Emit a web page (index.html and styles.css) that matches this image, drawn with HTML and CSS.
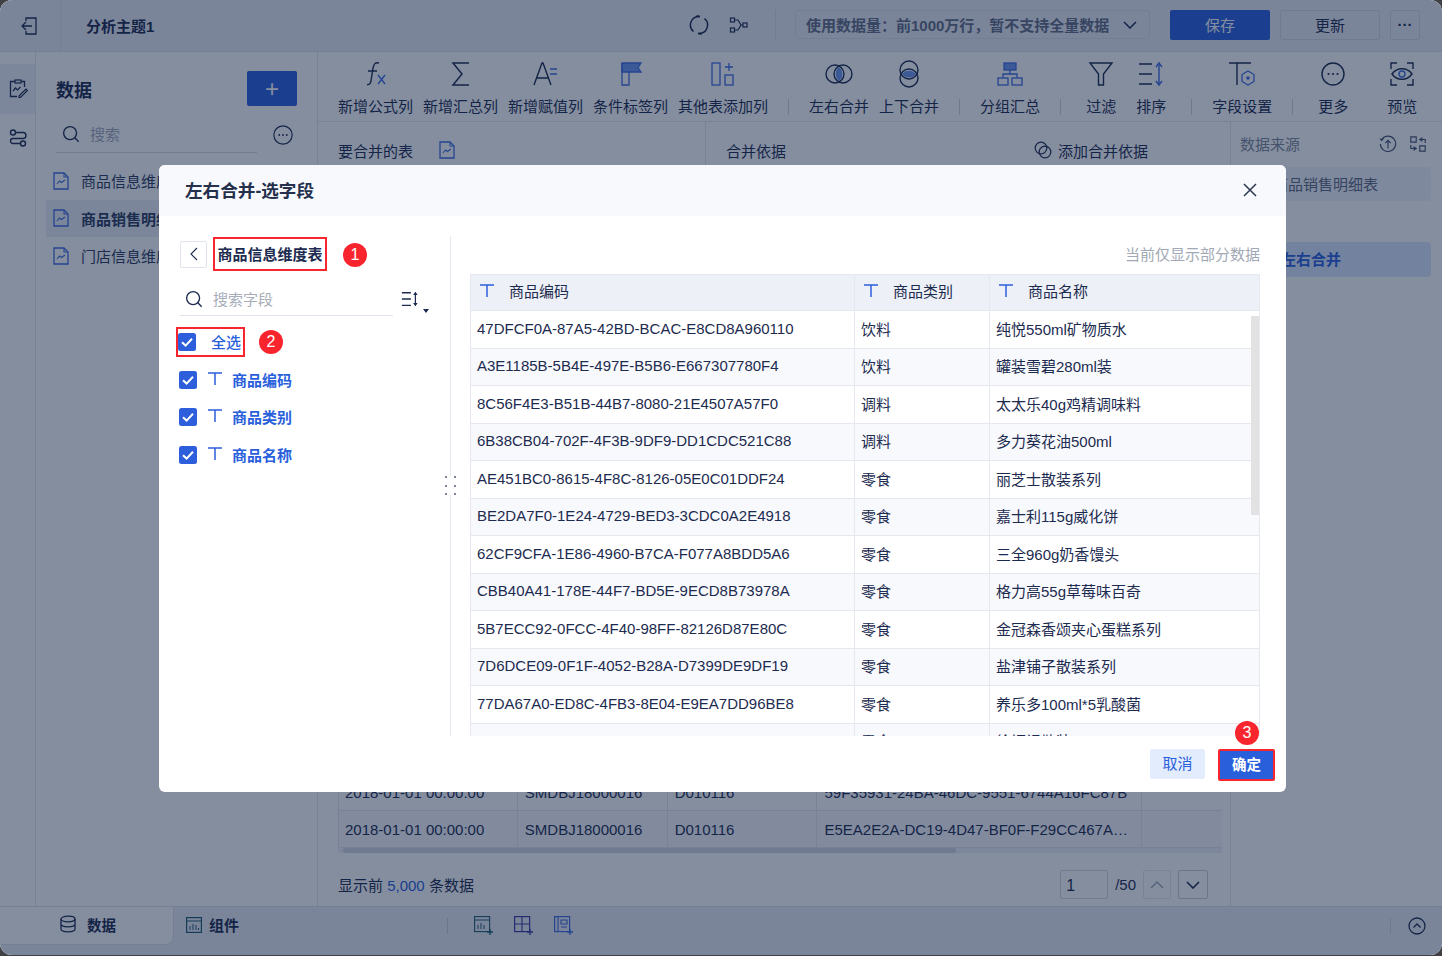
FILE: index.html
```html
<!DOCTYPE html>
<html lang="zh">
<head>
<meta charset="utf-8">
<title>分析主题1</title>
<link rel="stylesheet" href="styles.css">
</head>
<body>
<svg class="defs" width="0" height="0">
  <symbol id="file" viewBox="0 0 16 18"><path d="M1 1h10l4 4v12H1z" fill="none" stroke="#3d6be0" stroke-width="1.3"/><path d="M11 1v4h4" fill="none" stroke="#3d6be0" stroke-width="1.1"/><path d="M4 12l2.5-3 2 1.5L12 8" fill="none" stroke="#3d6be0" stroke-width="1.1"/></symbol>
  <symbol id="check" viewBox="0 0 18 18"><rect width="18" height="18" rx="2.5" fill="#2d5fdc"/><path d="M4 9.2l3.6 3.4L14 5.8" fill="none" stroke="#fff" stroke-width="2"/></symbol>
  <symbol id="tee" viewBox="0 0 14 14"><path d="M0 1h14M7 1v12" fill="none" stroke="#2d5fdc" stroke-width="1.5"/></symbol>
  <symbol id="mag" viewBox="0 0 20 20"><circle cx="9" cy="9" r="7.2" fill="none" stroke="#1c2b4f" stroke-width="1.5"/><path d="M14 14l4.5 4.5" stroke="#1c2b4f" stroke-width="1.5"/></symbol>
  <symbol id="sort" viewBox="0 0 20 20"><path d="M1 3h10M1 10h10M1 17h10" stroke="#1c2b4f" stroke-width="1.5"/><path d="M16 3v14" stroke="#1c2b4f" stroke-width="1.4"/><path d="M13.5 5.5L16 2l2.5 3.5zM13.5 14.5L16 18l2.5-3.5z" fill="#1c2b4f"/></symbol>
  <symbol id="more" viewBox="0 0 24 24"><circle cx="12" cy="12" r="11" fill="none" stroke="#1c2b4f" stroke-width="1.4"/><circle cx="7.5" cy="12" r="1.1" fill="#1c2b4f"/><circle cx="12" cy="12" r="1.1" fill="#1c2b4f"/><circle cx="16.500" cy="12" r="1.1" fill="#1c2b4f"/></symbol>
</svg>

<div class="app">
  <header class="topbar">
    <div class="backcell">
      <svg class="ic20" viewBox="0 0 20 20"><path d="M6 5V2h10v16H6v-3" fill="none" stroke="#1c2b4f" stroke-width="1.3"/><path d="M12 10H2M6 6l-4 4 4 4" fill="none" stroke="#1c2b4f" stroke-width="1.3"/></svg>
    </div>
    <div class="apptitle">分析主题1</div>
    <div class="topright">
      <svg class="ic20" viewBox="0 0 20 20"><path d="M4.500 16.500A8.500 8.500 0 0 1 9.500 1.500M15.500 3.500A8.500 8.500 0 0 1 10.500 18.500" fill="none" stroke="#1c2b4f" stroke-width="1.500"/><path d="M11 1.600L7.500 1M9 18.400l3.500.6" stroke="#1c2b4f" stroke-width="1.800"/></svg>
      <svg class="ic20 gapl" viewBox="0 0 20 20"><rect x="1.500" y="3" width="4" height="4" fill="none" stroke="#1c2b4f" stroke-width="1.200"/><rect x="1.500" y="13" width="4" height="4" fill="none" stroke="#1c2b4f" stroke-width="1.200"/><rect x="14" y="8" width="4" height="4" fill="none" stroke="#1c2b4f" stroke-width="1.200"/><path d="M5.500 5H9l3 5-3 5H5.500M12 10h2" fill="none" stroke="#1c2b4f" stroke-width="1.200"/></svg>
      <span class="vline"></span>
      <div class="selectbox"><span>使用数据量：前1000万行，暂不支持全量数据</span>
        <svg class="chev" viewBox="0 0 14 8"><path d="M1 1l6 6 6-6" fill="none" stroke="#1c2b4f" stroke-width="1.500"/></svg>
      </div>
      <button class="btn primary">保存</button>
      <button class="btn outline">更新</button>
      <button class="btn dots">···</button>
    </div>
  </header>

  <div class="main">
    <nav class="rail">
      <div class="railitem active">
        <svg class="ic20" viewBox="0 0 20 20"><path d="M7 2.500H2.500v15H9M13 2.500h3.500V8" fill="none" stroke="#1c2b4f" stroke-width="1.300"/><rect x="7" y="1" width="6" height="3" fill="none" stroke="#1c2b4f" stroke-width="1.200"/><path d="M5 12l2.500-3 2 2 3-3M11 17l7-7 1.500 1.500-7 7H11z" fill="none" stroke="#1c2b4f" stroke-width="1.200"/></svg>
      </div>
      <div class="railitem">
        <svg class="ic20" viewBox="0 0 20 20"><circle cx="5" cy="4.500" r="2.500" fill="none" stroke="#1c2b4f" stroke-width="1.400"/><circle cx="15" cy="15.500" r="2.500" fill="none" stroke="#1c2b4f" stroke-width="1.400"/><path d="M8 4.500h7a3 3 0 0 1 0 6H5a2.500 2.500 0 0 0 0 5h7" fill="none" stroke="#1c2b4f" stroke-width="1.400"/></svg>
      </div>
    </nav>

    <aside class="datapanel">
      <div class="dp-head"><span class="dp-title">数据</span><button class="plus">+</button></div>
      <div class="dp-search">
        <div class="dp-searchbox"><svg class="ic18" viewBox="0 0 20 20"><use href="#mag"/></svg><span class="ph">搜索</span></div>
        <svg class="ic20 dp-more" viewBox="0 0 24 24"><use href="#more"/></svg>
      </div>
      <div class="dp-item"><svg class="filei"><use href="#file"/></svg><span>商品信息维度表</span></div>
      <div class="dp-item sel"><svg class="filei"><use href="#file"/></svg><span>商品销售明细表</span></div>
      <div class="dp-item"><svg class="filei"><use href="#file"/></svg><span>门店信息维度表</span></div>
    </aside>

    <div class="work">
      <div class="toolbar">
        <div class="tool"><svg class="ticon" viewBox="0 0 28 28"><path d="M17 3c-4-1-5 1-6 5l-2 13c-.6 3-2 4-4 3.500M6 11h9" fill="none" stroke="#1c2b4f" stroke-width="1.400"/><path d="M16 15l7 9M23 15l-7 9" stroke="#3d6be0" stroke-width="1.400"/></svg><span>新增公式列</span></div>
        <div class="tool"><svg class="ticon" viewBox="0 0 28 28"><path d="M22 3H6l9 11-9 11h16" fill="none" stroke="#1c2b4f" stroke-width="1.500"/></svg><span>新增汇总列</span></div>
        <div class="tool"><svg class="ticon" viewBox="0 0 28 28"><path d="M2 25L10 3h1l8 22M5 18h11" fill="none" stroke="#1c2b4f" stroke-width="1.400"/><path d="M18 9h7M18 14h7" stroke="#3d6be0" stroke-width="1.400"/></svg><span>新增赋值列</span></div>
        <div class="tool"><svg class="ticon" viewBox="0 0 28 28"><path d="M5 3h19l-3 4.500 3 4.500H5z" fill="#6d94ee" stroke="#3d6be0" stroke-width="1.300"/><path d="M5 3v22h7V12" fill="none" stroke="#3d6be0" stroke-width="1.300"/></svg><span>条件标签列</span></div>
        <div class="tool"><svg class="ticon" viewBox="0 0 28 28"><rect x="3" y="3" width="8" height="22" fill="none" stroke="#3d6be0" stroke-width="1.300"/><rect x="16" y="15" width="8" height="10" fill="none" stroke="#3d6be0" stroke-width="1.300"/><path d="M20 3v8M16 7h8" stroke="#3d6be0" stroke-width="1.300"/></svg><span>其他表添加列</span></div>
        <span class="tsep"></span>
        <div class="tool"><svg class="ticon" viewBox="0 0 28 28"><circle cx="10" cy="14" r="9" fill="none" stroke="#1c2b4f" stroke-width="1.400"/><circle cx="18" cy="14" r="9" fill="none" stroke="#1c2b4f" stroke-width="1.400"/><path d="M14 7a9 9 0 0 1 0 14 9 9 0 0 1 0-14z" fill="#6d94ee"/></svg><span>左右合并</span></div>
        <div class="tool"><svg class="ticon" viewBox="0 0 28 28"><circle cx="14" cy="10" r="9" fill="none" stroke="#1c2b4f" stroke-width="1.400"/><circle cx="14" cy="18" r="9" fill="none" stroke="#1c2b4f" stroke-width="1.400"/><path d="M7 14a9 9 0 0 1 14 0 9 9 0 0 1-14 0z" fill="#6d94ee"/></svg><span>上下合并</span></div>
        <span class="tsep"></span>
        <div class="tool"><svg class="ticon" viewBox="0 0 28 28"><rect x="8" y="3" width="12" height="7" fill="#6d94ee" stroke="#3d6be0" stroke-width="1.300"/><rect x="2" y="18" width="10" height="7" fill="none" stroke="#3d6be0" stroke-width="1.300"/><rect x="16" y="18" width="10" height="7" fill="none" stroke="#3d6be0" stroke-width="1.300"/><path d="M14 10v4M7 18v-4h14v4" fill="none" stroke="#3d6be0" stroke-width="1.300"/></svg><span>分组汇总</span></div>
        <span class="tsep"></span>
        <div class="tgroup filtergroup">
          <div class="tool"><svg class="ticon" viewBox="0 0 28 28"><path d="M3 3h22l-8.500 11v11h-5V14z" fill="none" stroke="#1c2b4f" stroke-width="1.400"/></svg><span>过滤</span></div>
          <div class="tool"><svg class="ticon" viewBox="0 0 28 28"><path d="M2 4h13M2 14h13M2 24h13" stroke="#1c2b4f" stroke-width="1.400"/><path d="M22 4v20" stroke="#3d6be0" stroke-width="1.400"/><path d="M19 7l3-4 3 4M19 21l3 4 3-4" fill="none" stroke="#3d6be0" stroke-width="1.400"/></svg><span>排序</span></div>
        </div>
        <span class="tsep"></span>
        <div class="tgroup">
          <div class="tool"><svg class="ticon" viewBox="0 0 28 28"><path d="M1 3h22M9 3v22" fill="none" stroke="#1c2b4f" stroke-width="1.400"/><path d="M20 11l6 3.500v7L20 25l-6-3.500v-7z" fill="none" stroke="#3d6be0" stroke-width="1.300"/><circle cx="20" cy="18" r="1.800" fill="#3d6be0"/></svg><span>字段设置</span></div>
        </div>
        <span class="tsep"></span>
        <div class="tgroup moregroup">
          <div class="tool"><svg class="ticon" viewBox="-2 -2 28 28"><use href="#more" width="24" height="24"/></svg><span>更多</span></div>
          <div class="tool"><svg class="ticon" viewBox="0 0 28 28"><path d="M3 9V3h6M19 3h6v6M25 19v6h-6M9 25H3v-6" fill="none" stroke="#1c2b4f" stroke-width="1.400"/><path d="M4 14c5-7 15-7 20 0-5 7-15 7-20 0z" fill="none" stroke="#1c2b4f" stroke-width="1.400"/><circle cx="14" cy="14" r="3" fill="none" stroke="#3d6be0" stroke-width="1.400"/></svg><span>预览</span></div>
        </div>
      </div>

      <div class="workbody">
        <section class="center">
          <div class="mergehead">
            <div class="mh-left">要合并的表<svg class="filei"><use href="#file"/></svg></div>
            <div class="mh-right"><span>合并依据</span><span class="addkey"><svg class="ic18" viewBox="0 0 18 18"><circle cx="7" cy="7" r="5.800" fill="none" stroke="#1c2b4f" stroke-width="1.200"/><circle cx="11" cy="11" r="5.800" fill="none" stroke="#1c2b4f" stroke-width="1.200"/></svg>添加合并依据</span></div>
          </div>
          <div class="bgspace"></div>
          <div class="bgtable">
            <div class="bgrow"><span class="c1">2018-01-01 00:00:00</span><span class="c2">SMDBJ18000016</span><span class="c3">D010116</span><span class="c4">59F35931-24BA-46DC-9551-6744A16FC87B</span><span class="c5"></span></div>
            <div class="bgrow alt"><span class="c1">2018-01-01 00:00:00</span><span class="c2">SMDBJ18000016</span><span class="c3">D010116</span><span class="c4">E5EA2E2A-DC19-4D47-BF0F-F29CC467A…</span><span class="c5"></span></div>
          </div>
          <div class="hscroll"><div class="hthumb"></div></div>
          <div class="pager">
            <div>显示前 <span class="link">5,000</span> 条数据</div>
            <div class="pagerright">
              <span class="pageinput">1</span><span class="pagecount">/50</span>
              <span class="pagebtn off"><svg viewBox="0 0 14 8"><path d="M1 7l6-6 6 6" fill="none" stroke="#9aa3b5" stroke-width="1.400"/></svg></span>
              <span class="pagebtn"><svg viewBox="0 0 14 8"><path d="M1 1l6 6 6-6" fill="none" stroke="#1c2b4f" stroke-width="1.600"/></svg></span>
            </div>
          </div>
        </section>
        <aside class="source">
          <div class="src-head"><span>数据来源</span>
            <svg class="ic18" viewBox="0 0 20 20"><path d="M3 5a8.500 8.500 0 1 1-1.500 5" fill="none" stroke="#44526e" stroke-width="1.300"/><path d="M1 4l2 2 2-2M10 15V6M7 9l3-3 3 3" fill="none" stroke="#44526e" stroke-width="1.300"/></svg>
            <svg class="ic18" viewBox="0 0 20 20"><path d="M2 2h6v6H2zM12 12h6v6h-6z" fill="none" stroke="#44526e" stroke-width="1.300"/><path d="M12 5h6V9M15 3l-3 2 3 2M8 15H2v-4M5 13l3 2-3 2" fill="none" stroke="#44526e" stroke-width="1.300"/></svg>
          </div>
          <div class="src-card">商品销售明细表</div>
          <div class="src-step">左右合并</div>
        </aside>
      </div>
    </div>
  </div>

  <footer class="bottombar">
    <div class="tab-data">
      <svg class="ic18" viewBox="0 0 18 18"><ellipse cx="9" cy="4" rx="7" ry="2.800" fill="none" stroke="#1c2b4f" stroke-width="1.300"/><path d="M2 4v10c0 1.500 3 2.800 7 2.800s7-1.300 7-2.800V4M2 9c0 1.500 3 2.800 7 2.800s7-1.300 7-2.800" fill="none" stroke="#1c2b4f" stroke-width="1.300"/></svg>
      数据
    </div>
    <div class="tab-comp">
      <svg class="ic16" viewBox="0 0 16 16"><rect x=".6" y=".6" width="14.800" height="14.800" fill="none" stroke="#1e5a6e" stroke-width="1.200"/><path d="M1 4h14M4 13V9M7 13V7M10 13V8M12.500 13v-2" stroke="#1e5a6e" stroke-width="1"/></svg>
      组件
    </div>
    <span class="bsep"></span>
    <svg class="bicon" viewBox="0 0 20 20"><rect x=".6" y=".6" width="15" height="15" fill="none" stroke="#1e5a6e" stroke-width="1.100"/><path d="M1 4h15M4 13V9M7 13V7M10 13V9" stroke="#1e5a6e"/><path d="M16 13v6M13 16h6" stroke="#1e5a6e" stroke-width="1.300"/></svg>
    <svg class="bicon" viewBox="0 0 20 20"><rect x=".6" y=".6" width="15" height="15" fill="none" stroke="#3a3aa0" stroke-width="1.200"/><path d="M1 8h15M8 1v15" stroke="#3a3aa0" stroke-width="1.100"/><path d="M16 13v6M13 16h6" stroke="#3a3aa0" stroke-width="1.300"/></svg>
    <svg class="bicon" viewBox="0 0 20 20"><rect x=".6" y=".6" width="15" height="15" fill="none" stroke="#3d6be0" stroke-width="1.200"/><path d="M4 1v15M7 4h6v4H7zM7 11h6" fill="none" stroke="#3d6be0" stroke-width="1.100"/><path d="M16 13v6M13 16h6" stroke="#3d6be0" stroke-width="1.300"/></svg>
    <div class="bright">
      <span class="bsep2"></span>
      <svg class="ic18" viewBox="0 0 18 18"><circle cx="9" cy="9" r="8" fill="none" stroke="#1c2b4f" stroke-width="1.300"/><path d="M5.500 10.500L9 7l3.500 3.500" fill="none" stroke="#1c2b4f" stroke-width="1.300"/></svg>
    </div>
  </footer>
</div>

<div class="overlay"></div>

<div class="modal">
  <div class="modal-head">
    <span>左右合并-选字段</span>
    <svg class="closex" viewBox="0 0 14 14"><path d="M1 1l12 12M13 1L1 13" stroke="#2b3750" stroke-width="1.500"/></svg>
  </div>
  <div class="modal-body">
    <div class="fieldpane">
      <div class="fp-top">
        <span class="backbtn"><svg viewBox="0 0 8 14"><path d="M7 1L1 7l6 6" fill="none" stroke="#1c2b4f" stroke-width="1.100"/></svg></span>
        <span class="tablename">商品信息维度表</span>
        <span class="badge">1</span>
      </div>
      <div class="fp-search">
        <div class="fp-searchbox"><svg class="ic18" viewBox="0 0 20 20"><use href="#mag"/></svg><span class="ph2">搜索字段</span></div>
        <svg class="ic18 sorti" viewBox="0 0 20 20"><use href="#sort"/></svg>
        <span class="caret"></span>
      </div>
      <div class="fp-all">
        <label class="allbox"><svg class="cb"><use href="#check"/></svg><span>全选</span></label>
        <span class="badge">2</span>
      </div>
      <div class="fp-field"><svg class="cb"><use href="#check"/></svg><svg class="teei"><use href="#tee"/></svg><span>商品编码</span></div>
      <div class="fp-field"><svg class="cb"><use href="#check"/></svg><svg class="teei"><use href="#tee"/></svg><span>商品类别</span></div>
      <div class="fp-field"><svg class="cb"><use href="#check"/></svg><svg class="teei"><use href="#tee"/></svg><span>商品名称</span></div>
      <div class="grip"><i></i><i></i><i></i><i></i><i></i><i></i></div>
    </div>
    <div class="previewpane">
      <div class="hint">当前仅显示部分数据</div>
      <div class="grid">
        <div class="gr gh"><div class="g1"><svg class="teei"><use href="#tee"/></svg>商品编码</div><div class="g2"><svg class="teei"><use href="#tee"/></svg>商品类别</div><div class="g3"><svg class="teei"><use href="#tee"/></svg>商品名称</div></div>
        <div class="gr"><div class="g1">47DFCF0A-87A5-42BD-BCAC-E8CD8A960110</div><div class="g2">饮料</div><div class="g3">纯悦550ml矿物质水</div></div>
        <div class="gr alt"><div class="g1">A3E1185B-5B4E-497E-B5B6-E667307780F4</div><div class="g2">饮料</div><div class="g3">罐装雪碧280ml装</div></div>
        <div class="gr"><div class="g1">8C56F4E3-B51B-44B7-8080-21E4507A57F0</div><div class="g2">调料</div><div class="g3">太太乐40g鸡精调味料</div></div>
        <div class="gr alt"><div class="g1">6B38CB04-702F-4F3B-9DF9-DD1CDC521C88</div><div class="g2">调料</div><div class="g3">多力葵花油500ml</div></div>
        <div class="gr"><div class="g1">AE451BC0-8615-4F8C-8126-05E0C01DDF24</div><div class="g2">零食</div><div class="g3">丽芝士散装系列</div></div>
        <div class="gr alt"><div class="g1">BE2DA7F0-1E24-4729-BED3-3CDC0A2E4918</div><div class="g2">零食</div><div class="g3">嘉士利115g威化饼</div></div>
        <div class="gr"><div class="g1">62CF9CFA-1E86-4960-B7CA-F077A8BDD5A6</div><div class="g2">零食</div><div class="g3">三全960g奶香馒头</div></div>
        <div class="gr alt"><div class="g1">CBB40A41-178E-44F7-BD5E-9ECD8B73978A</div><div class="g2">零食</div><div class="g3">格力高55g草莓味百奇</div></div>
        <div class="gr"><div class="g1">5B7ECC92-0FCC-4F40-98FF-82126D87E80C</div><div class="g2">零食</div><div class="g3">金冠森香颂夹心蛋糕系列</div></div>
        <div class="gr alt"><div class="g1">7D6DCE09-0F1F-4052-B28A-D7399DE9DF19</div><div class="g2">零食</div><div class="g3">盐津铺子散装系列</div></div>
        <div class="gr"><div class="g1">77DA67A0-ED8C-4FB3-8E04-E9EA7DD96BE8</div><div class="g2">零食</div><div class="g3">养乐多100ml*5乳酸菌</div></div>
        <div class="gr alt"><div class="g1"></div><div class="g2">零食</div><div class="g3">徐福记散装</div></div>
        <div class="vscroll"></div>
      </div>
    </div>
  </div>
  <div class="modal-foot">
    <button class="mbtn cancel">取消</button>
    <button class="mbtn ok">确定<span class="badge badge3">3</span></button>
  </div>
</div>
</body>
</html>
```

FILE: styles.css
```css
* { box-sizing: border-box; }
html, body { margin: 0; padding: 0; }
body {
  width: 1442px;
  height: 956px;
  overflow: hidden;
  background: #3f4145;
  font-family: "Liberation Sans", "Noto Sans CJK SC", sans-serif;
  font-size: 15px;
  color: #1c2b4f;
  position: relative;
}
button { font: inherit; border: 0; padding: 0; }
.defs { position: absolute; }
.ic20 { width: 20px; height: 20px; flex: none; }
.ic18 { width: 18px; height: 18px; flex: none; }
.ic16 { width: 16px; height: 16px; flex: none; }

.app {
  width: 1442px;
  height: 955px;
  border-radius: 12px;
  overflow: hidden;
  background: #fff;
  display: flex;
  flex-direction: column;
}

/* top bar */
.topbar {
  height: 52px;
  flex: none;
  display: flex;
  align-items: center;
  background: #ebedf3;
  border-bottom: 1px solid #dfe2ea;
}
.backcell {
  width: 61px;
  height: 51px;
  display: flex;
  align-items: center;
  padding-left: 20px;
  border-right: 1px solid #dfe2ea;
}
.apptitle { margin-left: 25px; font-weight: 700; font-size: 15px; }
.topright { margin-left: auto; display: flex; align-items: center; padding: 0 22px 2px 0; }
.gapl { margin-left: 20px; }
.vline { width: 1px; height: 30px; background: #d8dce5; margin: 0 19px 0 26px; }
.selectbox {
  width: 355px;
  height: 29px;
  border: 1px solid #dbdfe8;
  border-radius: 3px;
  padding: 0 10px;
  display: flex;
  align-items: center;
  justify-content: space-between;
  font-weight: 700;
  color: #626d85;
  font-size: 15px;
  white-space: nowrap;
}
.chev { width: 14px; height: 8px; margin-right: 2px; flex: none; }
.btn { height: 30px; border-radius: 2px; background: transparent; color: #1c2b4f; }
.primary { width: 100px; margin-left: 20px; background: #2a5fdc; color: #fff; }
.outline { width: 100px; margin-left: 10px; border: 1px solid #d5d9e3; }
.dots { width: 30px; margin-left: 10px; border: 1px solid #d5d9e3; font-weight: 700; }

/* main */
.main { flex: 1; display: flex; min-height: 0; }
.rail { width: 36px; flex: none; border-right: 1px solid #e4e7ee; padding-top: 12px; }
.railitem { height: 50px; display: flex; align-items: center; justify-content: center; }
.railitem.active { background: #eef0f6; }
.railitem + .railitem { height: 48px; }

.datapanel { width: 282px; flex: none; border-right: 1px solid #e4e7ee; padding-left: 10px; }
.dp-head { display: flex; align-items: center; justify-content: space-between; padding: 19px 20px 0 10px; height: 54px; }
.dp-title { font-size: 18px; font-weight: 700; }
.plus { width: 50px; height: 35px; border-radius: 2px; background: #2a5fdc; color: #fff; font-size: 24px; line-height: 30px; font-weight: 300; }
.dp-search { display: flex; align-items: center; margin: 11px 0 9px 10px; }
.dp-searchbox { width: 201px; height: 36px; border-bottom: 1px solid #d5d9e3; display: flex; align-items: center; padding: 0 0 2px 6px; }
.ph { margin-left: 10px; color: #a4abb9; font-size: 15px; }
.dp-more { margin-left: 16px; }
.dp-item { height: 37.500px; display: flex; align-items: center; padding-left: 7px; white-space: nowrap; color: #2b3a5c; font-size: 15px; overflow: hidden; }
.dp-item.sel { background: #eceff5; font-weight: 700; }
.filei { width: 16px; height: 18px; flex: none; margin-right: 12px; }

.work { flex: 1; display: flex; flex-direction: column; min-width: 0; }
.toolbar {
  height: 70px;
  flex: none;
  border-bottom: 1px solid #e4e7ee;
  display: flex;
  align-items: flex-start;
  padding: 8px 0 0 20px;
  gap: 10px;
}
.tool { display: flex; flex-direction: column; align-items: center; white-space: nowrap; }
.tool span { line-height: 22px; margin-top: 8px; }
.ticon { width: 28px; height: 28px; display: block; margin-top: 0; }
.tsep { width: 1px; height: 16px; margin: 39px 10px 0 10px; background: #cfd4df; flex: none; }
.tgroup { display: flex; gap: 20px; }
.filtergroup { padding: 0 5px; }
.moregroup { padding-left: 5px; gap: 39px; }

.workbody { flex: 1; display: flex; min-height: 0; }
.center { flex: 1; display: flex; flex-direction: column; padding: 0 8px 0 20px; border-right: 1px solid #e4e7ee; min-width: 0; }
.mergehead { display: flex; height: 58px; }
.mh-left { width: 368px; height: 58px; display: flex; align-items: center; gap: 26px; padding-bottom: 2px; border-right: 1px solid #e4e7ee; }
.mh-left .filei { margin: 0; }
.mh-right { flex: 1; display: flex; align-items: center; justify-content: space-between; padding: 0 74px 2px 20px; }
.addkey { display: flex; align-items: center; gap: 6px; }
.bgspace { flex: 1; }
.bgtable { border-left: 1px solid #e4e7ee; font-size: 15px; }
.bgrow { height: 37px; display: flex; align-items: center; border-bottom: 1px solid #e4e7ee; white-space: nowrap; }
.bgrow.alt { background: #f8f9fd; }
.bgrow span { height: 100%; padding-left: 7px; display: flex; align-items: center; border-right: 1px solid #e4e7ee; }
.bgrow .c1 { width: 179px; padding-left: 6px; }
.c2 { width: 150px; }
.c3 { width: 150px; }
.c4 { width: 325px; }
.c5 { width: 80px; border-right: 0 !important; }
.hscroll { height: 5px; background: #eef0f6; }
.hthumb { width: 613px; height: 5px; margin-left: 5px; border-radius: 3px; background: #d3d7e0; }
.pager { height: 53px; display: flex; align-items: center; justify-content: space-between; padding: 10px 14px 0 0; }
.link { color: #2a5fdc; }
.pagerright { display: flex; align-items: center; }
.pageinput { width: 48px; height: 29px; border: 1px solid #d5d9e3; border-radius: 2px; padding-left: 5px; line-height: 30px; font-size: 16px; }
.pagecount { margin: 0 7px; }
.pagebtn { width: 30px; height: 29px; border: 1px solid #c9ced9; border-radius: 2px; display: flex; align-items: center; justify-content: center; margin-left: 7px; }
.pagebtn svg { width: 14px; height: 8px; }
.pagebtn.off { width: 28px; border-color: #e4e7ee; margin-left: 0; }

.source { width: 211px; flex: none; padding: 0 11px 0 9px; }
.src-head { height: 45px; display: flex; align-items: center; color: #7f8899; gap: 12px; padding: 0 4px 2px 0; }
.src-head span { margin-right: auto; }
.src-card { height: 34px; margin-left: 1px; background: #f3f5fa; border-radius: 4px; line-height: 36px; padding-left: 32px; color: #5d6880; }
.src-step { height: 35px; margin: 41px 0 0 1px; background: #dbe6fd; border-radius: 4px; line-height: 35px; padding-left: 40px; color: #2a5fdc; font-weight: 700; }

/* bottom */
.bottombar { height: 49px; flex: none; background: #ebedf3; border-top: 1px solid #dfe2ea; display: flex; align-items: center; padding-bottom: 10px; position: relative; }
.tab-data { width: 174px; height: 38px; margin-top: 0; align-self: flex-start; background: #fff; border-right: 1px solid #dde0e8; border-bottom: 1px solid #dde0e8; border-radius: 0 0 8px 0; display: flex; align-items: center; padding: 0 0 3px 59px; gap: 10px; font-weight: 700; font-size: 14.500px; }
.tab-comp { display: flex; align-items: center; gap: 7px; margin: 0 0 3px 12px; font-weight: 700; }
.bsep { width: 1px; height: 16px; background: #c9ced9; margin: 0 26px 0 208px; }
.bicon { width: 20px; height: 20px; margin-right: 20px; }
.bright { margin-left: auto; display: flex; align-items: center; gap: 17px; padding-right: 16px; }
.bsep2 { width: 1px; height: 16px; background: #d3d7e0; }

/* overlay */
.overlay { position: absolute; inset: 0 0 1px 0; border-radius: 12px; background: rgba(11, 29, 63, .5); }

/* modal */
.modal {
  position: absolute;
  left: 159px;
  top: 165px;
  width: 1127px;
  height: 627px;
  background: #fff;
  border-radius: 6px;
  overflow: visible;
  display: flex;
  flex-direction: column;
}
.modal-head {
  height: 51px;
  flex: none;
  background: #f8f9fd;
  border-radius: 6px 6px 0 0;
  display: flex;
  align-items: center;
  justify-content: space-between;
  padding: 0 29px 2px 26px;
  font-size: 17.600px;
  font-weight: 700;
  color: #24304c;
}
.closex { width: 14px; height: 14px; }
.modal-body { height: 520px; flex: none; display: flex; padding-top: 20px; }
.fieldpane { width: 292px; height: 500px; flex: none; border-right: 1px solid #e6e8f0; padding: 1px 0 0 21px; position: relative; }
.fp-top { display: flex; align-items: center; height: 34px; }
.backbtn { width: 27px; height: 27px; border: 1px solid #dfe3ec; border-radius: 2px; display: flex; align-items: center; justify-content: center; }
.backbtn svg { width: 8px; height: 14px; }
.tablename { margin-left: 6px; width: 114px; height: 34px; border: 2px solid #f9252e; display: flex; align-items: center; justify-content: center; padding-bottom: 2px; font-size: 15px; font-weight: 700; white-space: nowrap; }
.badge { width: 24px; height: 24px; border-radius: 50%; background: #f9252e; color: #fff; font-size: 16px; display: flex; align-items: center; justify-content: center; flex: none; }
.fp-top .badge { margin: 2px 0 0 16px; }
.fp-search { display: flex; align-items: center; margin-top: 11px; position: relative; height: 34px; }
.fp-searchbox { width: 213px; height: 34px; border-bottom: 1px solid #e0e3ec; display: flex; align-items: center; padding-left: 5px; }
.ph2 { margin-left: 10px; color: #a7adba; font-size: 15px; }
.sorti { margin-left: 8px; }
.caret { position: absolute; left: 243px; top: 27px; border: 3.500px solid transparent; border-top: 4px solid #1c2b4f; }
.fp-all { display: flex; align-items: center; margin: 11px 0 0 -4px; height: 30px; }
.allbox { width: 69px; height: 30px; border: 2px solid #f9252e; display: flex; align-items: center; padding: 0 0 1px 0; color: #2a5fdc; font-weight: 500; }
.allbox span { margin-left: 15px; }
.fp-all .badge { margin-left: 14px; }
.cb { width: 18px; height: 18px; flex: none; }
.fp-field { display: flex; align-items: center; height: 37.500px; margin-left: -1px; color: #2a5fdc; font-weight: 700; font-size: 15px; }
.fp-all + .fp-field { margin-top: 4px; }
.fp-field span { padding-bottom: 1px; }
.teei { width: 14px; height: 14px; flex: none; margin: -2px 10px 0 11px; }
.grip { position: absolute; right: -6px; top: 240px; width: 11px; height: 19px; display: grid; grid-template-columns: 2px 2px; justify-content: space-between; align-content: space-between; background: #fff; }
.grip i { width: 2px; height: 2px; background: #7c8596; }

.previewpane { flex: 1; padding: 0 26px 0 19px; display: flex; flex-direction: column; height: 500px; }
.hint { height: 38px; text-align: right; color: #a2a9b6; font-size: 15px; line-height: 37px; flex: none; }
.grid { position: relative; flex: 1; overflow: hidden; border-left: 1px solid #e6e8f0; border-right: 1px solid #e6e8f0; border-top: 1px solid #e6e8f0; }
.gr { display: flex; height: 37.500px; border-bottom: 1px solid #e6e8f0; }
.gr.alt { background: #f8f9fd; }
.gr.gh { background: #edf0f6; height: 36px; }
.gr > div { display: flex; align-items: center; padding: 0 0 2px 6px; white-space: nowrap; border-right: 1px solid #e6e8f0; }
.gr.gh > div { padding-bottom: 4px; }
.g1 { width: 384px; }
.g2 { width: 135px; }
.gr > .g3 { flex: 1; border-right: 0; }
.gh .teei { margin: 1px 15px 0 3px; }
.vscroll { position: absolute; right: 0; top: 41px; width: 8px; height: 199px; background: #e2e2e2; }

.modal-foot { flex: 1; display: flex; justify-content: flex-end; align-items: flex-start; padding: 13px 11px 0 0; gap: 13px; }
.mbtn { width: 55px; height: 30px; border-radius: 2px; position: relative; padding-bottom: 3px; }
.cancel { background: #e3ecfd; color: #2a5fdc; }
.ok { width: 57px; height: 32px; background: #2a5fdc; color: #fff; font-weight: 700; border: 2px solid #f9252e; font-size: 14.500px; }
.badge3 { position: absolute; right: 14px; top: -30px; font-weight: 400; }
```
